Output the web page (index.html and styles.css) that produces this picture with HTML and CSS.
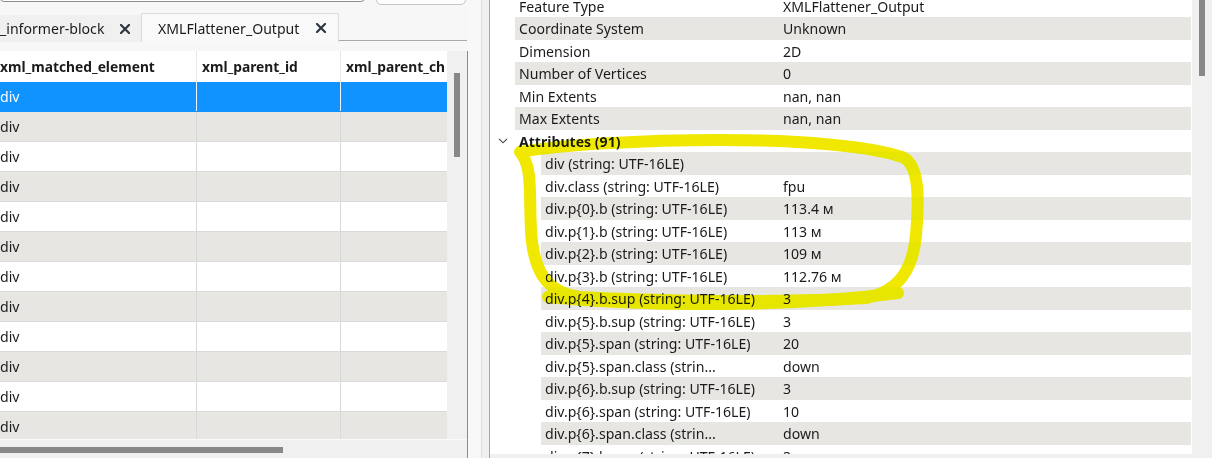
FILE: index.html
```html
<!DOCTYPE html>
<html>
<head>
<meta charset="utf-8">
<link rel="stylesheet" href="styles.css">
</head>
<body>
<div class="app">
  <section class="left">
    <div class="topbar">
      <div class="search"></div>
      <div class="btn"></div>
    </div>
    <div class="tabs">
      <div class="tab">
        <span class="tab-label">_informer-block</span>
        <svg class="close" width="10" height="10" viewBox="0 0 10 10"><path d="M1 1 L9 9 M9 1 L1 9" stroke="#2c3540" stroke-width="2.2" stroke-linecap="square"/></svg>
      </div>
      <div class="tab active">
        <span class="tab-label">XMLFlattener_Output</span>
        <svg class="close" width="10" height="10" viewBox="0 0 10 10"><path d="M1 1 L9 9 M9 1 L1 9" stroke="#2c3540" stroke-width="2.2" stroke-linecap="square"/></svg>
      </div>
      <div class="tab-fill"></div>
    </div>
    <div class="table-wrap">
      <div class="table-main">
        <div class="table">
          <div class="trow thead"><div class="c c1">xml_matched_element</div><div class="c c2">xml_parent_id</div><div class="c c3">xml_parent_ch</div></div>
          <div class="trow sel"><div class="c c1">div</div><div class="c c2"></div><div class="c c3"></div></div>
          <div class="trow alt"><div class="c c1">div</div><div class="c c2"></div><div class="c c3"></div></div>
          <div class="trow"><div class="c c1">div</div><div class="c c2"></div><div class="c c3"></div></div>
          <div class="trow alt"><div class="c c1">div</div><div class="c c2"></div><div class="c c3"></div></div>
          <div class="trow"><div class="c c1">div</div><div class="c c2"></div><div class="c c3"></div></div>
          <div class="trow alt"><div class="c c1">div</div><div class="c c2"></div><div class="c c3"></div></div>
          <div class="trow"><div class="c c1">div</div><div class="c c2"></div><div class="c c3"></div></div>
          <div class="trow alt"><div class="c c1">div</div><div class="c c2"></div><div class="c c3"></div></div>
          <div class="trow"><div class="c c1">div</div><div class="c c2"></div><div class="c c3"></div></div>
          <div class="trow alt"><div class="c c1">div</div><div class="c c2"></div><div class="c c3"></div></div>
          <div class="trow"><div class="c c1">div</div><div class="c c2"></div><div class="c c3"></div></div>
          <div class="trow alt"><div class="c c1">div</div><div class="c c2"></div><div class="c c3"></div></div>
        </div>
        <div class="vscroll"><div class="vthumb"></div></div>
      </div>
      <div class="hscroll"><div class="hthumb"></div></div>
    </div>
  </section>
  <div class="splitter"><div class="sp-a"></div><div class="sp-b"></div></div>
  <section class="right">
    <div class="right-main">
      <div class="props">
        <div class="prow"><div class="ind"></div><div class="pc"><span class="lbl">Feature Type</span><span class="val">XMLFlattener_Output</span></div></div>
        <div class="prow"><div class="ind"></div><div class="pc alt"><span class="lbl">Coordinate System</span><span class="val">Unknown</span></div></div>
        <div class="prow"><div class="ind"></div><div class="pc"><span class="lbl">Dimension</span><span class="val">2D</span></div></div>
        <div class="prow"><div class="ind"></div><div class="pc alt"><span class="lbl">Number of Vertices</span><span class="val">0</span></div></div>
        <div class="prow"><div class="ind"></div><div class="pc"><span class="lbl">Min Extents</span><span class="val">nan, nan</span></div></div>
        <div class="prow"><div class="ind"></div><div class="pc alt"><span class="lbl">Max Extents</span><span class="val">nan, nan</span></div></div>
        <div class="prow"><div class="ind"><svg class="chev" width="10" height="6" viewBox="0 0 10 6"><path d="M1 0.8 L5 4.8 L9 0.8" fill="none" stroke="#444" stroke-width="1.1"/></svg></div><div class="pc"><span class="lbl bold">Attributes (91)</span><span class="val"></span></div></div>
        <div class="prow sub"><div class="ind"></div><div class="pc alt"><span class="lbl">div (string: UTF-16LE)</span><span class="val"></span></div></div>
        <div class="prow sub"><div class="ind"></div><div class="pc"><span class="lbl">div.class (string: UTF-16LE)</span><span class="val">fpu</span></div></div>
        <div class="prow sub"><div class="ind"></div><div class="pc alt"><span class="lbl">div.p{0}.b (string: UTF-16LE)</span><span class="val">113.4 м</span></div></div>
        <div class="prow sub"><div class="ind"></div><div class="pc"><span class="lbl">div.p{1}.b (string: UTF-16LE)</span><span class="val">113 м</span></div></div>
        <div class="prow sub"><div class="ind"></div><div class="pc alt"><span class="lbl">div.p{2}.b (string: UTF-16LE)</span><span class="val">109 м</span></div></div>
        <div class="prow sub"><div class="ind"></div><div class="pc"><span class="lbl">div.p{3}.b (string: UTF-16LE)</span><span class="val">112.76 м</span></div></div>
        <div class="prow sub"><div class="ind"></div><div class="pc alt"><span class="lbl">div.p{4}.b.sup (string: UTF-16LE)</span><span class="val">3</span></div></div>
        <div class="prow sub"><div class="ind"></div><div class="pc"><span class="lbl">div.p{5}.b.sup (string: UTF-16LE)</span><span class="val">3</span></div></div>
        <div class="prow sub"><div class="ind"></div><div class="pc alt"><span class="lbl">div.p{5}.span (string: UTF-16LE)</span><span class="val">20</span></div></div>
        <div class="prow sub"><div class="ind"></div><div class="pc"><span class="lbl">div.p{5}.span.class (strin...</span><span class="val">down</span></div></div>
        <div class="prow sub"><div class="ind"></div><div class="pc alt"><span class="lbl">div.p{6}.b.sup (string: UTF-16LE)</span><span class="val">3</span></div></div>
        <div class="prow sub"><div class="ind"></div><div class="pc"><span class="lbl">div.p{6}.span (string: UTF-16LE)</span><span class="val">10</span></div></div>
        <div class="prow sub"><div class="ind"></div><div class="pc alt"><span class="lbl">div.p{6}.span.class (strin...</span><span class="val">down</span></div></div>
        <div class="prow sub"><div class="ind"></div><div class="pc"><span class="lbl">div.p{7}.b.sup (string: UTF-16LE)</span><span class="val">3</span></div></div>
      </div>
      <div class="rscroll"><div class="rthumb"></div></div>
    </div>
    <div class="rbottom"></div>
  </section>
  <svg class="marker" width="1212" height="458" viewBox="0 0 1212 458">
    <path d="M520 152 C560 145 640 140 720 140 C800 140 870 146 902 157 C920 164 919 200 916 235 C913 268 900 291 866 298 C780 303 650 301 580 297 C546 293 533 270 531 230 C529 195 533 166 520 152 Z" fill="none" stroke="#f0e800" stroke-width="12" stroke-linejoin="round" stroke-linecap="round"/>
    <path d="M548 297 C650 307 790 307 898 293" fill="none" stroke="#f0e800" stroke-width="12" stroke-linecap="round"/>
  </svg>
</div>
</body>
</html>
```

FILE: styles.css
```css
* { box-sizing: border-box; }
html, body { margin: 0; padding: 0; }
body {
  width: 1212px;
  height: 458px;
  overflow: hidden;
  font-family: "Noto Sans", "Liberation Sans", sans-serif;
  font-size: 14.1px;
  color: #1b1b1b;
}
.app {
  position: relative;
  display: flex;
  width: 1212px;
  height: 458px;
  overflow: hidden;
  background: #f7f7f7;
}

/* ---------- left panel ---------- */
.left {
  width: 468px;
  flex: none;
  display: flex;
  flex-direction: column;
}
.topbar {
  flex: none;
  height: 13px;
  display: flex;
  align-items: flex-end;
  gap: 11px;
  overflow: hidden;
}
.search {
  width: 365px;
  height: 20px;
  margin-bottom: 11px;
  border: 1px solid #8e8e8e;
  border-radius: 4px;
  background: #fff;
}
.btn {
  width: 90px;
  height: 20px;
  margin-bottom: 8px;
  border: 1px solid #c6c6c6;
  border-radius: 5px;
  background: #fdfdfd;
}
.tabs {
  flex: none;
  height: 29px;
  display: flex;
  align-items: flex-end;
}
.tab {
  height: 27px;
  width: 141px;
  display: flex;
  align-items: center;
  background: #f0f0f0;
  white-space: nowrap;
  overflow: hidden;
}
.tab .tab-label { flex: none; }
.tab .close { margin-left: 16px; flex: none; }
.tab.active {
  width: 198px;
  height: 29px;
  background: #f9f9f9;
  border: 1px solid #dcdcdc;
  border-bottom: none;
  padding-left: 16px;
}
.tab.active .close { margin-left: 17px; }
.tab-fill {
  flex: 1;
  height: 1px;
  margin-bottom: 1px;
  margin-right: 1px;
  background: #a9a9a9;
}
.table-wrap {
  margin-top: 9px;
  flex: 1;
  min-height: 0;
  display: flex;
  flex-direction: column;
  border-right: 1px solid #8c8c8c;
}
.table-main {
  flex: 1;
  display: flex;
  min-height: 0;
}
.table {
  width: 447px;
  background: #fff;
  overflow: hidden;
}
.trow {
  display: flex;
  height: 30px;
  border-bottom: 1px solid #d9d9d9;
}
.trow.thead {
  height: 31px;
  border-bottom: none;
  font-weight: bold;
  font-size: 13.8px;
}
.trow.alt { background: #e7e6e2; }
.trow.sel { background: #1093fe; color: #fff; border-bottom-color: #1093fe; }
.c {
  display: flex;
  align-items: center;
  border-right: 1px solid #d9d9d9;
  white-space: nowrap;
  overflow: hidden;
  padding-left: 5px;
}
.thead .c { border-right-color: #e6e6e6; }
.sel .c { border-right-color: #eef4fb; }
.c1 { width: 197px; padding-left: 0; }
.c2 { width: 144px; }
.c3 { width: 106px; border-right: none; }
.vscroll {
  width: 20px;
  background: #f0f0f0;
}
.vthumb {
  width: 6px;
  height: 84px;
  margin: 22px 0 0 7px;
  background: #888;
}
.hscroll {
  flex: none;
  height: 19px;
  background: #f0f0f0;
  border-top: 1px solid #fafafa;
}
.hthumb {
  width: 283px;
  height: 6px;
  margin-top: 7px;
  background: #888;
}

/* ---------- splitter ---------- */
.splitter {
  width: 22px;
  flex: none;
  display: flex;
  background: #f0f0f0;
  border-right: 1px solid #a4a4a4;
}
.sp-a {
  width: 13px;
  background: #f8f8f8;
  border-right: 1px solid #dedede;
  box-sizing: content-box;
}

/* ---------- right panel ---------- */
.right {
  flex: 1;
  display: flex;
  flex-direction: column;
}
.right-main {
  height: 454px;
  flex: none;
  display: flex;
}
.props {
  flex: 1;
  background: #fff;
  overflow: hidden;
  padding-right: 1px;
}
.prow:first-child { margin-top: -5.25px; }
.prow {
  height: 22.5px;
  display: flex;
}
.ind {
  width: 25px;
  flex: none;
  display: flex;
  align-items: center;
  padding-left: 8px;
}
.prow.sub .ind { width: 51px; }
.pc {
  flex: 1;
  display: grid;
  grid-template-columns: 268px 1fr;
  align-items: center;
  white-space: nowrap;
}
.prow.sub .pc { grid-template-columns: 242px 1fr; }
.pc.alt { background: #e7e6e2; }
.lbl { padding-left: 4px; overflow: hidden; }
.lbl.bold { font-weight: bold; }
.rscroll {
  width: 20px;
  background: #f0f0f0;
}
.rthumb {
  width: 6px;
  height: 76px;
  margin-left: 7px;
  background: #888;
}
.rbottom {
  height: 4px;
  background: #f0f0f0;
}

/* highlighter annotation over the content */
.marker {
  position: absolute;
  left: 0;
  top: 0;
  pointer-events: none;
  mix-blend-mode: darken;
}
```
